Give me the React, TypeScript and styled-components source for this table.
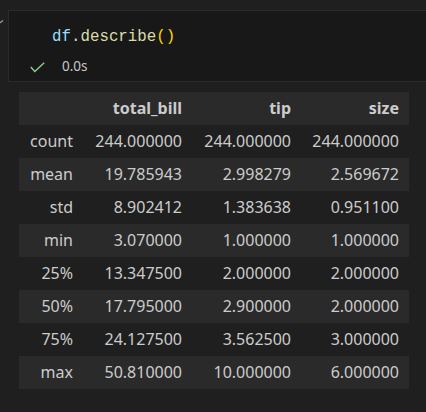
import React from "react";
import styled, { createGlobalStyle } from "styled-components";

const Global = createGlobalStyle`
  html, body { margin: 0; padding: 0; background: #1f1f1f; overflow: hidden; }
  body { font-family: "Noto Sans", "Open Sans", sans-serif; }
`;

const Page = styled.div`
  width: 426px;
  height: 412px;
  padding-top: 10px;
  box-sizing: border-box;
  background: #1f1f1f;
  overflow: hidden;
`;

const CellRow = styled.div`
  display: flex;
  align-items: flex-start;
`;

const Gutter = styled.div`
  width: 8px;
  height: 72px;
  overflow: hidden;
  position: relative;
  flex: none;
`;

const CellBox = styled.div`
  flex: none;
  width: 430px;
  height: 72px;
  box-sizing: border-box;
  border: 1px solid #2b2b2b;
  background: #181818;
  display: flex;
  flex-direction: column;
`;

const CodeLine = styled.div`
  font-family: "Liberation Mono", "DejaVu Sans Mono", monospace;
  font-size: 15.8px;
  line-height: 20px;
  padding: 16px 0 0 43px;
  white-space: pre;
`;

const Tok = styled.span<{ $c: string }>`
  color: ${(p) => p.$c};
`;

const Status = styled.div`
  display: flex;
  align-items: center;
  padding: 9px 0 0 21px;
  height: 20px;
`;

const TimeText = styled.span`
  font-family: "Noto Sans", sans-serif;
  font-size: 13.5px;
  color: #c8c8c8;
  margin-left: 16px;
`;

const Table = styled.table`
  margin: 10px 0 0 19px;
  border-collapse: collapse;
  table-layout: fixed;
  width: 390px;
  color: #cccccc;
  font-size: 16px;
`;

const Row = styled.tr<{ $shade: boolean }>`
  background: ${(p) => (p.$shade ? "#2a2a2a" : "transparent")};
  height: 33px;
`;

const Th = styled.th`
  text-align: right;
  padding: 0 10px;
  font-weight: 700;
  line-height: 33px;
`;

const Td = styled.td`
  text-align: right;
  padding: 0 10px;
  font-weight: 400;
  line-height: 33px;
  white-space: nowrap;
`;

const cols = [64, 109, 109, 108];

const data: [string, string, string, string][] = [
  ["count", "244.000000", "244.000000", "244.000000"],
  ["mean", "19.785943", "2.998279", "2.569672"],
  ["std", "8.902412", "1.383638", "0.951100"],
  ["min", "3.070000", "1.000000", "1.000000"],
  ["25%", "13.347500", "2.000000", "2.000000"],
  ["50%", "17.795000", "2.900000", "2.000000"],
  ["75%", "24.127500", "3.562500", "3.000000"],
  ["max", "50.810000", "10.000000", "6.000000"],
];

export default function App() {
  return (
    <Page>
      <Global />
      <CellRow>
        <Gutter>
          <svg width="8" height="40" viewBox="0 0 8 40" style={{ position: "absolute", left: 0, top: 0 }}>
            <polyline points="-6,11 -3,15 3,10.5" fill="none" stroke="#a0a0a0" strokeWidth="1.3" />
          </svg>
        </Gutter>
        <CellBox>
          <CodeLine>
            <Tok $c="#9cdcfe">df</Tok>
            <Tok $c="#d4d4d4">.</Tok>
            <Tok $c="#dcdcaa">describe</Tok>
            <Tok $c="#ffd700">()</Tok>
          </CodeLine>
          <Status>
            <svg width="16" height="16" viewBox="0 0 16 16">
              <polyline points="0.8,9 4.8,13.5 14.2,4.7" fill="none" stroke="#89d185" strokeWidth="1.4" />
            </svg>
            <TimeText>0.0s</TimeText>
          </Status>
        </CellBox>
      </CellRow>
      <Table>
        <colgroup>
          {cols.map((w, i) => (
            <col key={i} style={{ width: w }} />
          ))}
        </colgroup>
        <thead>
          <Row $shade={true}>
            <Th></Th>
            <Th>total_bill</Th>
            <Th>tip</Th>
            <Th>size</Th>
          </Row>
        </thead>
        <tbody>
          {data.map((r, i) => (
            <Row key={r[0]} $shade={i % 2 === 1}>
              {r.map((c, j) => (
                <Td key={j}>{c}</Td>
              ))}
            </Row>
          ))}
        </tbody>
      </Table>
    </Page>
  );
}
